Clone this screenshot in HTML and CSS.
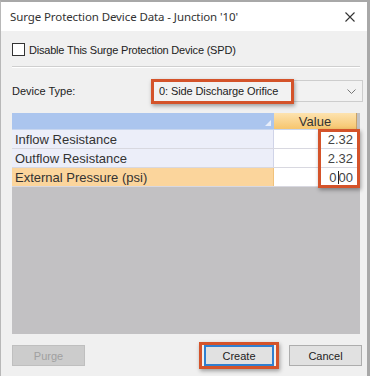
FILE: index.html
```html
<!DOCTYPE html>
<html>
<head>
<meta charset="utf-8">
<link rel="stylesheet" href="styles.css">
</head>
<body>
<div class="window">
  <div class="titlebar">
    <span class="title">Surge Protection Device Data - Junction '10'</span>
    <svg class="close" width="10" height="10" viewBox="0 0 10 10"><path d="M0.5 0.5 L9.5 9.5 M9.5 0.5 L0.5 9.5" stroke="#333" stroke-width="1.1"/></svg>
  </div>
  <div class="content">
    <label class="check-row">
      <span class="checkbox"></span>
      <span class="check-label">Disable This Surge Protection Device (SPD)</span>
    </label>
    <div class="sep"></div>
    <div class="type-row">
      <span class="type-label">Device Type:</span>
      <div class="select">
        <span class="select-text">0: Side Discharge Orifice</span>
        <svg class="chev" width="9" height="5" viewBox="0 0 9 5"><path d="M0.5 0.5 L4.5 4.5 L8.5 0.5" fill="none" stroke="#777" stroke-width="1"/></svg>
        <div class="hl hl-select"></div>
      </div>
    </div>
    <div class="grid">
      <div class="row header">
        <div class="cell name"><span class="sort"></span></div>
        <div class="cell val head-val">Value</div>
      </div>
      <div class="row">
        <div class="cell name">Inflow Resistance</div>
        <div class="cell val">2.32</div>
      </div>
      <div class="row">
        <div class="cell name">Outflow Resistance</div>
        <div class="cell val">2.32</div>
      </div>
      <div class="row active">
        <div class="cell name">External Pressure (psi)</div>
        <div class="cell val">0<span class="caret"></span>00</div>
      </div>
      <div class="hl hl-values"></div>
    </div>
    <div class="buttons">
      <button class="btn disabled">Purge</button>
      <span class="spacer"></span>
      <div class="create-wrap">
        <button class="btn primary">Create</button>
        <div class="hl hl-create"></div>
      </div>
      <button class="btn">Cancel</button>
    </div>
  </div>
</div>
</body>
</html>
```
FILE: styles.css
```css
* { box-sizing: border-box; }
html, body { margin: 0; padding: 0; }
body {
  width: 370px;
  height: 376px;
  overflow: hidden;
  background: #f0f0f0;
  font-family: "Liberation Sans", Arial, sans-serif;
  color: #222;
}
.window {
  width: 370px;
  height: 376px;
  border-top: 2px solid #a8a8a8;
  border-left: 1px solid #b8b8b8;
  border-right: 3px solid #a8a8a8;
  background: #f0f0f0;
}
.titlebar {
  height: 29px;
  background: #ffffff;
  display: flex;
  align-items: center;
  justify-content: space-between;
  padding: 0 12px 0 9px;
}
.title {
  font-family: "Noto Sans", sans-serif;
  font-size: 11.5px;
  color: #333;
  letter-spacing: -0.1px;
}
.close { margin-top: 1px; }
.content {
  padding: 12px 0 0 11px;
}
.check-row {
  display: flex;
  align-items: center;
  height: 13px;
}
.checkbox {
  width: 13px;
  height: 13px;
  border: 1px solid #333;
  background: #fff;
  display: inline-block;
}
.check-label {
  margin-left: 4px;
  font-size: 11px;
  color: #222;
  letter-spacing: -0.2px;
}
.sep {
  margin: 10px 6px 0 0;
  height: 2px;
  border-top: 1px solid #cfcfcf;
  border-bottom: 1px solid #ffffff;
  width: 348px;
}
.type-row {
  display: flex;
  align-items: center;
  margin-top: 12px;
  height: 22px;
}
.type-label {
  font-size: 11px;
  width: 140px;
}
.select {
  position: relative;
  width: 211px;
  height: 22px;
  border: 1px solid #cdcdcd;
  background: #f2f2f2;
  display: flex;
  align-items: center;
  justify-content: space-between;
  padding: 0 6px 0 6px;
}
.select-text { font-size: 11px; letter-spacing: -0.1px; }
.chev { margin-top: 1px; }
.hl {
  position: absolute;
  border: 3px solid #d4532a;
  box-shadow: 1px 2px 4px rgba(0,0,0,0.35);
  pointer-events: none;
}
.hl-select {
  left: -2px;
  top: -2px;
  width: 143px;
  height: 25px;
}
.grid {
  position: relative;
  margin-top: 11px;
  width: 348px;
  height: 221px;
  background: #c2c1c3;
  display: flex;
  flex-direction: column;
}
.row {
  display: flex;
  height: 19px;
  border-bottom: 1px solid #d8d8e0;
}
.row .cell {
  display: flex;
  align-items: center;
  font-size: 13px;
  color: #333;
}
.name {
  width: 262px;
  padding-left: 3px;
  background: #eceef9;
  border-right: 1px solid #d0d4e8;
}
.row .val {
  width: 83px;
  background: #ffffff;
  justify-content: flex-end;
  padding-right: 4px;
  color: #444;
}
.header { height: 17px; border-bottom: 1px solid #c8d6ee; }
.header .name {
  background: #abc5ee;
  position: relative;
  border-right: none;
}
.sort {
  position: absolute;
  right: 3px;
  bottom: 3px;
  width: 0;
  height: 0;
  border-left: 6px solid transparent;
  border-bottom: 6px solid #e8eefa;
}
.row .head-val {
  background: linear-gradient(#fde3b0, #f6c56d);
  justify-content: center;
  padding-right: 0;
  font-size: 13px;
  color: #333;
  border-right: 1px solid #c9a267;
}
.active .name {
  background: #fbd59c;
  border-right-color: #f0c27c;
}
.caret {
  display: inline-block;
  width: 1px;
  height: 13px;
  background: #222;
  margin: 0 0 0 1px;
}
.hl-values {
  left: 306px;
  top: 16px;
  width: 42px;
  height: 59px;
}
.buttons {
  display: flex;
  align-items: center;
  margin-top: 11px;
  width: 350px;
  height: 21px;
}
.spacer { flex: 1; }
.btn {
  font-family: "Liberation Sans", Arial, sans-serif;
  font-size: 11px;
  color: #222;
  width: 73px;
  height: 21px;
  background: #e1e1e1;
  border: 1px solid #adadad;
  padding: 0;
}
.btn.disabled {
  background: #cccccc;
  border-color: #bfbfbf;
  color: #a0a0a0;
}
.create-wrap {
  position: relative;
  margin-right: 15px;
}
.btn.primary {
  width: 70px;
  border: 2px solid #2f7fd0;
  display: block;
}
.hl-create {
  left: -5px;
  top: -3px;
  width: 80px;
  height: 27px;
}
```
